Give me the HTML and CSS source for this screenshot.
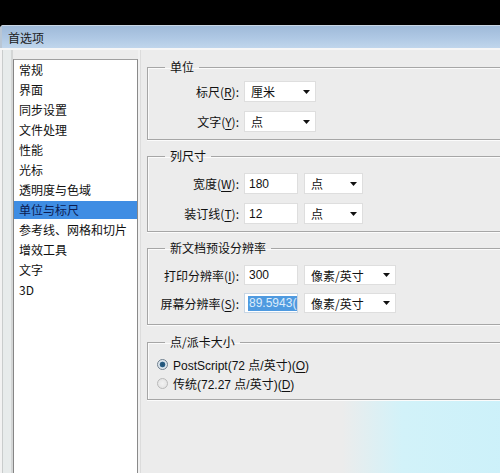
FILE: index.html
```html
<!DOCTYPE html>
<html lang="zh-CN">
<head>
<meta charset="utf-8">
<title>首选项</title>
<link rel="stylesheet" href="styles.css">
</head>
<body>
<div class="desk"></div>
<div class="window">
  <div class="titlebar"><span class="title">首选项</span></div>
  <div class="content">
    <div class="frame-left"></div>
    <ul class="list">
      <li>常规</li>
      <li>界面</li>
      <li>同步设置</li>
      <li>文件处理</li>
      <li>性能</li>
      <li>光标</li>
      <li>透明度与色域</li>
      <li class="selected">单位与标尺</li>
      <li>参考线、网格和切片</li>
      <li>增效工具</li>
      <li>文字</li>
      <li>3D</li>
    </ul>
    <div class="gutter"></div>
    <div class="main">
      <fieldset class="group g1">
        <legend>单位</legend>
        <div class="row r1">
          <label class="lbl">标尺(<u>R</u>):</label>
          <div class="select w72"><span>厘米</span><svg class="arrow" width="7" height="4" viewBox="0 0 7 4"><path d="M0 0H7L3.5 4Z" fill="#111"/></svg></div>
        </div>
        <div class="row r1">
          <label class="lbl">文字(<u>Y</u>):</label>
          <div class="select w72"><span>点</span><svg class="arrow" width="7" height="4" viewBox="0 0 7 4"><path d="M0 0H7L3.5 4Z" fill="#111"/></svg></div>
        </div>
      </fieldset>

      <fieldset class="group g2">
        <legend>列尺寸</legend>
        <div class="row r1">
          <label class="lbl">宽度(<u>W</u>):</label>
          <div class="input"><span>180</span></div>
          <div class="select w59"><span>点</span><svg class="arrow" width="7" height="4" viewBox="0 0 7 4"><path d="M0 0H7L3.5 4Z" fill="#111"/></svg></div>
        </div>
        <div class="row r1">
          <label class="lbl">装订线(<u>T</u>):</label>
          <div class="input"><span>12</span></div>
          <div class="select w59"><span>点</span><svg class="arrow" width="7" height="4" viewBox="0 0 7 4"><path d="M0 0H7L3.5 4Z" fill="#111"/></svg></div>
        </div>
      </fieldset>

      <fieldset class="group g3">
        <legend>新文档预设分辨率</legend>
        <div class="row r3">
          <label class="lbl">打印分辨率(<u>I</u>):</label>
          <div class="input"><span>300</span></div>
          <div class="select w92"><span>像素/英寸</span><svg class="arrow" width="7" height="4" viewBox="0 0 7 4"><path d="M0 0H7L3.5 4Z" fill="#111"/></svg></div>
        </div>
        <div class="row r3">
          <label class="lbl">屏幕分辨率(<u>S</u>):</label>
          <div class="input focus"><span class="sel-text">89.5943(</span></div>
          <div class="select w92"><span>像素/英寸</span><svg class="arrow" width="7" height="4" viewBox="0 0 7 4"><path d="M0 0H7L3.5 4Z" fill="#111"/></svg></div>
        </div>
      </fieldset>

      <fieldset class="group g4">
        <legend>点/派卡大小</legend>
        <div class="radio-row">
          <span class="radio on"></span>
          <span>PostScript(72 点/英寸)(<u>O</u>)</span>
        </div>
        <div class="radio-row">
          <span class="radio"></span>
          <span>传统(72.27 点/英寸)(<u>D</u>)</span>
        </div>
      </fieldset>

      <div class="backdrop"></div>
    </div>
  </div>
</div>
</body>
</html>
```

FILE: styles.css
```css
html, body {
  margin: 0;
  padding: 0;
}
body {
  width: 500px;
  height: 473px;
  overflow: hidden;
  background: #000;
  font-family: "Liberation Sans", "Noto Sans CJK SC", sans-serif;
  font-size: 12px;
  color: #111;
}
.desk {
  height: 25px;
  background: #000;
}
.window {
  height: 448px;
  background: #ececec;
  border-top-left-radius: 4px;
  overflow: hidden;
  display: flex;
  flex-direction: column;
}
.titlebar {
  height: 22px;
  border-top: 1px solid #c9d6e4;
  background: linear-gradient(to bottom, #9fbad9 0%, #afc8e4 55%, #c0d6ec 100%);
  display: flex;
  align-items: center;
  padding-left: 6px;
  border-left: 2px solid #b9c6d4;
}
.title {
  font-family: "Noto Sans CJK SC", sans-serif;
  font-size: 12px;
  color: #1b1b1b;
  line-height: 14px;
  padding-top: 1px;
}
.content {
  flex: 1;
  display: flex;
  border-top: 2px solid #f6f6f6;
  background: #ececec;
  min-height: 0;
}
.frame-left {
  width: 13px;
  flex: none;
  background: linear-gradient(to right, #f2f2f2 0, #f2f2f2 2px, #c9cccc 2px, #c9cccc 3px, #e7ebeb 3px, #e7ebeb 11px, #d4d6d6 11px, #d4d6d6 13px);
}
.list {
  list-style: none;
  margin: 9px 0 0 0;
  padding: 0;
  width: 123px;
  flex: none;
  background: #fff;
  border-left: 1px solid #858585;
  border-right: 1px solid #8a8a8a;
  border-top: 1px solid #a0a0a0;
  font-family: "Noto Sans CJK SC", sans-serif;
}
.list li {
  height: 18px;
  line-height: 18px;
  border-top: 1px solid transparent;
  border-bottom: 1px solid transparent;
  background-clip: padding-box;
  padding-left: 5px;
  white-space: nowrap;
  color: #111;
}
.list li.selected {
  background-color: #3f8de3;
  color: #0d1c52;
}
.gutter {
  width: 9px;
  flex: none;
  background: linear-gradient(to right, #f1f1f1 0, #f1f1f1 2px, #dcdcdc 2px, #dcdcdc 3px, #ececec 3px);
}
.main {
  flex: none;
  width: 420px;
  padding-top: 10px;
  display: flex;
  flex-direction: column;
}
.group {
  margin: 0;
  padding: 0;
  border: 1px solid #a6a6a6;
  border-right: none;
  box-shadow: inset 1px 1px 0 #fbfbfb, 0 1px 0 #fbfbfb;
  min-width: 0;
}
.group legend {
  margin-left: 17px;
  padding: 0 5px;
  line-height: 14px;
  font-family: "Noto Sans CJK SC", sans-serif;
  color: #111;
}
.g1 { padding-top: 7px; padding-bottom: 7px; display: flex; flex-direction: column; gap: 9px; }
.g2 { margin-top: 9px; padding-top: 10px; padding-bottom: 7px; display: flex; flex-direction: column; gap: 9px; }
.g3 { margin-top: 9px; padding-top: 10px; padding-bottom: 11px; display: flex; flex-direction: column; gap: 8px; }
.g4 { margin-top: 10px; padding-top: 6px; padding-bottom: 6px; }

.row {
  display: grid;
  grid-template-columns: 93px auto auto;
  justify-content: start;
  align-items: center;
}
.r1 { height: 21px; }
.r3 { height: 20px; }
.lbl {
  text-align: right;
  white-space: nowrap;
  padding-right: 2px;
  font-family: "Noto Sans CJK SC", sans-serif;
}
.lbl u, .radio-row u {
  text-decoration-thickness: 1px;
  text-underline-offset: 2px;
}
.input, .select {
  height: 100%;
  box-sizing: border-box;
  background: #fff;
  border: 1px solid #dedede;
  display: flex;
  align-items: center;
  font-family: "Noto Sans CJK SC", sans-serif;
}
.input {
  width: 54px;
  padding-left: 4px;
  margin-left: 3px;
  font-family: "Liberation Sans", sans-serif;
  overflow: hidden;
  white-space: nowrap;
}
.input.focus {
  border-color: #c8d6e4;
  padding-left: 3px;
}
.sel-text {
  background: #4f9ae0;
  color: #dcecfb;
  line-height: 15px;
  padding: 0 1px;
}
.select {
  margin-left: 6px;
  padding-left: 6px;
  justify-content: space-between;
  padding-right: 5px;
}
.row .select:nth-child(2) { margin-left: 3px; }
.w72 { width: 72px; }
.w59 { width: 59px; }
.w92 { width: 92px; }
.arrow { display: block; flex: none; }

.radio-row {
  height: 19px;
  display: flex;
  align-items: center;
  padding-left: 9px;
  gap: 5px;
  font-family: "Liberation Sans", "Noto Sans CJK SC", sans-serif;
}
.radio {
  width: 11px;
  height: 11px;
  border-radius: 50%;
  box-sizing: border-box;
  border: 1px solid #b9b9b9;
  background: radial-gradient(circle, #f2f2f2 0, #e0e0e0 100%);
  flex: none;
}
.radio.on {
  border-color: #6f7f8e;
  background: radial-gradient(circle, #1f4f72 0, #2a5f86 2.5px, #d9e3ec 3.2px, #eef2f5 100%);
}

.backdrop {
  flex: 1;
  margin-top: 1px;
  background: linear-gradient(to right, rgba(210,243,250,0) 195px, #d2f2f9 255px, #c9f0fa 100%);
}
```
